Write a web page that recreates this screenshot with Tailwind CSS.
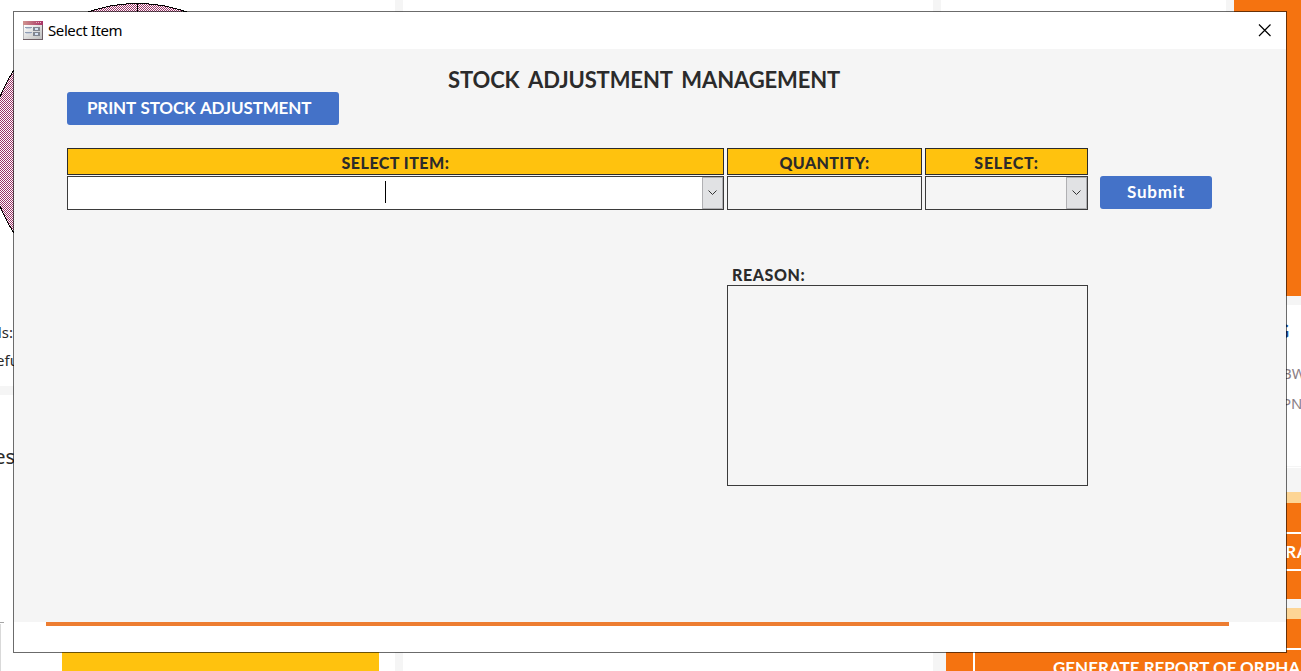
<!DOCTYPE html>
<html lang="en">
<head>
    <meta charset="UTF-8">
    <meta name="viewport" content="width=device-width, initial-scale=1.0">
    <title>Stock Adjustment Management</title>
    <script src="https://cdn.jsdelivr.net/npm/@tailwindcss/browser@4"></script>
</head>
<body class="relative w-[1301px] h-[671px] overflow-hidden bg-[#f5f5f5] font-['Lato',sans-serif] text-[#2b2b2b]">

    <!-- Dashboard behind the dialog -->
    <div class="flex gap-2 h-full whitespace-nowrap">
        <!-- Left column -->
        <div class="w-[395px] shrink-0 flex flex-col gap-[9px]">
            <div class="relative h-[386px] shrink-0 bg-white overflow-hidden">
                <svg class="absolute left-0 top-0" width="300" height="310" shape-rendering="crispEdges">
                    <defs>
                        <pattern id="dots" width="2" height="2" patternUnits="userSpaceOnUse">
                            <rect width="2" height="2" fill="#ffffff"/>
                            <rect width="1" height="1" fill="#993366"/>
                            <rect x="1" y="1" width="1" height="1" fill="#993366"/>
                        </pattern>
                    </defs>
                    <circle cx="137.5" cy="151.5" r="148" fill="url(#dots)" stroke="#000"/>
                    <path d="M137.5 3v148" stroke="#000"/>
                </svg>
                <p class="absolute right-[382px] top-[322px] text-[15px] leading-5 font-['Noto_Sans',sans-serif]">Goods:</p>
                <p class="absolute right-[376px] top-[350px] text-[15px] leading-5 font-['Noto_Sans',sans-serif]">Refu</p>
            </div>
            <div class="relative grow bg-white overflow-hidden">
                <p class="absolute right-[380px] top-[47px] text-[20px] leading-[30px] font-['Noto_Sans',sans-serif]">Sales</p>
                <div class="absolute -left-px top-[227px] w-[5px] h-[60px] border-t border-[#a6a6a6]"></div>
                <div class="absolute left-0 top-[229px] w-px h-[60px] bg-[#d9d9d9]"></div>
                <div class="absolute left-[62px] bottom-0 w-[317px] h-[60px] bg-[#ffc20e]"></div>
            </div>
        </div>

        <!-- Middle column -->
        <div class="w-[530px] shrink-0 bg-white"></div>

        <!-- Right column -->
        <div class="w-[360px] shrink-0 flex flex-col">
            <div class="flex gap-2 h-[466px] shrink-0">
                <div class="w-[285px] bg-white"></div>
                <div class="grow flex flex-col gap-[9px]">
                    <div class="h-[296px] bg-[#f57310]"></div>
                    <div class="relative grow bg-white overflow-hidden">
                        <p class="absolute right-[12px] top-[14px] text-[18px] leading-6 font-bold text-[#1f4e9c]">RANKING</p>
                        <p class="absolute left-[48px] top-[58px] text-[15px] leading-5 text-[#8c8087] font-['Noto_Sans',sans-serif]">BW</p>
                        <p class="absolute left-[48px] top-[88px] text-[15px] leading-5 text-[#8c8087] font-['Noto_Sans',sans-serif]">PN</p>
                    </div>
                </div>
            </div>
            <div class="mt-px h-px shrink-0 bg-white"></div>
            <div class="pl-[5px] pt-6 flex flex-col gap-[9px] shrink-0">
                <div class="flex flex-col gap-[2px] bg-white">
                    <div class="-mb-[2px] h-[11px] bg-[#fdd595]"></div>
                    <div class="h-[29px] bg-[#f57310]"></div>
                    <div class="h-[35px] bg-[#f57310] text-right text-white text-[17px] leading-[36px] font-bold tracking-[0.5px]">GENERATE R<span class="-mr-[8px]">A</span></div>
                    <div class="h-[28px] bg-[#f57310]"></div>
                </div>
                <div class="flex flex-col gap-[2px] bg-white">
                    <div class="-mb-[2px] h-[11px] bg-[#fdd595]"></div>
                    <div class="h-[29px] bg-[#f57310]"></div>
                    <div class="flex gap-[2px] h-[35px]">
                        <div class="w-[27px] shrink-0 bg-[#f57310]"></div>
                        <div class="grow bg-[#f57310] pl-[78px] text-white text-[17px] leading-[35px] font-bold overflow-hidden w-0">GENERATE REPORT OF ORPHANS</div>
                    </div>
                </div>
            </div>
        </div>
    </div>

    <!-- Dialog -->
    <div class="absolute left-[13px] top-[11px] w-[1274px] h-[642px] flex flex-col border border-black/58 bg-white bg-clip-padding">
        <!-- Title bar -->
        <div class="h-[37px] shrink-0 flex items-center justify-between pl-[9px] pr-[14px]">
            <div class="flex items-center gap-[5px]">
                <svg width="20" height="19" viewBox="0 0 20 19" shape-rendering="crispEdges">
                    <defs>
                        <linearGradient id="bar"><stop stop-color="#d0948f"/><stop offset="1" stop-color="#a83265"/></linearGradient>
                        <linearGradient id="body" x2="1" y2="1"><stop stop-color="#ffffff"/><stop offset="1" stop-color="#bdbdbd"/></linearGradient>
                    </defs>
                    <rect width="20" height="19" fill="#6e5f66"/>
                    <rect width="1" height="18" fill="#b5b5b8"/>
                    <rect x="1" y="4" width="18" height="14" fill="url(#body)"/>
                    <rect width="20" height="4" fill="url(#bar)"/>
                    <path d="M13 1.500h1M15 1.500h1M17 1.500h1" stroke="#e6b3c5"/>
                    <path d="M2 6.500h7M2 11.500h7" stroke="#8f9db5"/>
                    <path d="M3 7.500h5M3 12.500h5" stroke="#c9cfda"/>
                    <rect x="10" y="6" width="7" height="4" fill="#808590"/>
                    <rect x="12" y="7" width="3" height="2" fill="#d5e2f5"/>
                    <rect x="10" y="11" width="7" height="4" fill="#808590"/>
                    <rect x="12" y="12" width="3" height="2" fill="#d5e2f5"/>
                </svg>
                <span class="text-[15px] text-black font-['Noto_Sans',sans-serif] tracking-[-0.4px]">Select Item</span>
            </div>
            <button class="mr-px">
                <svg width="13" height="13" viewBox="0 0 13 13" fill="none" stroke="#000" stroke-width="1.2">
                    <path d="M1 .5l11.500 11.500M12.500 .5l-11.500 11.500"/>
                </svg>
            </button>
        </div>

        <!-- Form -->
        <div class="h-[573px] shrink-0 bg-[#f5f5f5] pl-[53px] pt-[18px]">
            <h1 class="ml-[381px] h-[25px] text-[22px] leading-[26px] font-bold tracking-[-0.12px] [word-spacing:4px] whitespace-nowrap">STOCK ADJUSTMENT MANAGEMENT</h1>
            <button class="block w-[272px] h-[33px] rounded-[3px] bg-[#4472c8] pl-5 text-left text-white text-[17px] font-bold whitespace-nowrap"><span class="block -mt-px leading-[30px] tracking-[-0.15px] [word-spacing:1px]">PRINT STOCK ADJUSTMENT</span></button>

            <div class="mt-[23px] flex items-end">
                <div class="flex gap-[3px]">
                    <div class="w-[657px] flex flex-col gap-px">
                        <div class="h-[27px] border border-[#2b2b2b] bg-[#ffc20e] text-center text-[16px] leading-[28px] font-black tracking-[0.5px]">SELECT ITEM:</div>
                        <div class="h-[34px] border border-[#3b3b3b] bg-white flex justify-between">
                            <div class="ml-[317px] mt-1 w-px h-[22px] bg-black"></div>
                            <div class="w-[21px] border border-[#b0b0b3] bg-[#e1e2e4] flex items-center justify-center">
                                <svg width="9" height="6" viewBox="0 0 9 6" fill="none" stroke="#333"><path d="M.5 .5l4 4l4-4"/></svg>
                            </div>
                        </div>
                    </div>
                    <div class="w-[195px] flex flex-col gap-px">
                        <div class="h-[27px] border border-[#2b2b2b] bg-[#ffc20e] text-center text-[16px] leading-[28px] font-black tracking-[0.4px]">QUANTITY:</div>
                        <div class="h-[34px] border border-[#3b3b3b]"></div>
                    </div>
                    <div class="w-[163px] flex flex-col gap-px">
                        <div class="h-[27px] border border-[#2b2b2b] bg-[#ffc20e] text-center text-[16px] leading-[28px] font-black tracking-[0.8px]">SELECT:</div>
                        <div class="h-[34px] border border-[#3b3b3b] flex justify-end">
                            <div class="w-[21px] border border-[#b0b0b3] bg-[#e1e2e4] flex items-center justify-center">
                                <svg width="9" height="6" viewBox="0 0 9 6" fill="none" stroke="#333"><path d="M.5 .5l4 4l4-4"/></svg>
                            </div>
                        </div>
                    </div>
                </div>
                <button class="ml-3 mb-px w-[112px] h-[33px] rounded-[3px] bg-[#4472c8] pb-[2px] text-white text-[17px] leading-[31px] font-bold tracking-[0.8px]">Submit</button>
            </div>

            <div class="ml-[660px] mt-[55px] w-[361px]">
                <label class="block h-5 pl-[5px] text-[16px] leading-[20px] font-black tracking-[0.6px]">REASON:</label>
                <div class="h-[201px] border border-[#3b3b3b]"></div>
            </div>
        </div>

        <!-- Footer line -->
        <div class="ml-8 w-[1183px] h-1 shrink-0 bg-[#ed7d31]"></div>
    </div>

</body>
</html>
